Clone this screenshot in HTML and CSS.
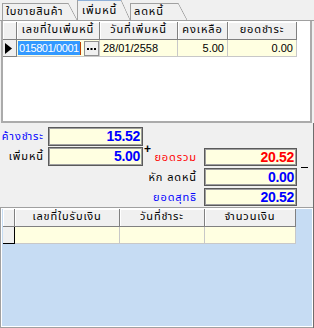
FILE: index.html
```html
<!DOCTYPE html>
<html lang="th">

<head>
  <meta charset="UTF-8">
  <title>เพิ่มหนี้</title>
  <link rel="stylesheet" href="styles.css">
</head>

<body>
  <div class="window">
    <div class="tabs">
      <div class="tab tab-sale">ใบขายสินค้า</div>
      <div class="tab tab-debit active">เพิ่มหนี้</div>
      <div class="tab tab-credit">ลดหนี้</div>
    </div>

    <div class="page">
      <!-- debit note grid -->
      <div class="grid top-grid">
        <div class="row head">
          <div class="cell ind"></div>
          <div class="cell c1">เลขที่ใบเพิ่มหนี้</div>
          <div class="cell c2">วันที่เพิ่มหนี้</div>
          <div class="cell c3">คงเหลือ</div>
          <div class="cell c4">ยอดชำระ</div>
        </div>
        <div class="row data">
          <div class="cell ind">
            <svg width="7" height="11" viewBox="0 0 7 11"><polygon points="0,0 7,5.5 0,11" fill="#000"/></svg>
          </div>
          <div class="cell c1 edit">
            <span class="sel">015801/0001</span><span class="caret"></span>
            <span class="dots">
              <svg width="13" height="13" viewBox="0 0 13 13">
                <rect x="2" y="6" width="2" height="2" fill="#000"/>
                <rect x="5.5" y="6" width="2" height="2" fill="#000"/>
                <rect x="9" y="6" width="2" height="2" fill="#000"/>
              </svg>
            </span>
          </div>
          <div class="cell c2">28/01/2558</div>
          <div class="cell c3 num">5.00</div>
          <div class="cell c4 num">0.00</div>
        </div>
      </div>
    </div>

    <div class="lower">
      <div class="summary">
        <div class="totals totals-left">
          <div class="field">
            <span class="label blue">ค้างชำระ</span>
            <div class="box blue">15.52</div>
          </div>
          <div class="field">
            <span class="label">เพิ่มหนี้</span>
            <div class="box blue">5.00</div>
          </div>
        </div>
        <span class="op plus">+</span>
        <div class="totals totals-right">
          <div class="field">
            <span class="label red">ยอดรวม</span>
            <div class="box red">20.52</div>
          </div>
          <div class="field">
            <span class="label">หัก ลดหนี้</span>
            <div class="box blue">0.00</div>
          </div>
          <div class="field">
            <span class="label blue">ยอดสุทธิ</span>
            <div class="box blue">20.52</div>
          </div>
        </div>
        <span class="op minus"></span>
      </div>

      <!-- payment grid -->
      <div class="payments">
        <div class="grid">
          <div class="row head">
            <div class="cell ind"></div>
            <div class="cell p1">เลขที่ใบรับเงิน</div>
            <div class="cell p2">วันที่ชำระ</div>
            <div class="cell p3">จำนวนเงิน</div>
          </div>
          <div class="row data">
            <div class="cell ind"></div>
            <div class="cell p1"></div>
            <div class="cell p2"></div>
            <div class="cell p3"></div>
          </div>
        </div>
      </div>
    </div>
  </div>
</body>

</html>
```

FILE: styles.css
```css
/* debit note tab */

body {
  margin: 0;
  background-color: #f0f0f0;
  font-family: Tahoma, "Noto Sans Thai", "Liberation Sans", sans-serif;
  font-size: 11px;
  letter-spacing: 0.9px;
  color: #000;
}

.window {
  width: 314px;
  height: 328px;
  overflow: hidden;
}

/* tabs */

.tabs {
  display: flex;
  height: 21px;
  padding-left: 2px;
  border-bottom: 1px solid #a0a0a0;
  box-sizing: border-box;
}

.tab {
  position: relative;
  height: 17px;
  margin-top: 3px;
  padding: 1px 0 0 3px;
  border-left: 1px solid #a0a0a0;
  box-sizing: border-box;
  white-space: nowrap;
  line-height: 15px;
}

.tab::before {
  content: "";
  position: absolute;
  left: 0;
  top: 0;
  width: calc(100% - 9px);
  border-top: 1px solid #a0a0a0;
}

.tab::after {
  content: "";
  position: absolute;
  right: 0;
  top: 0;
  width: 9px;
  height: 100%;
  background: linear-gradient(to top right, transparent calc(50% - 0.7px), #a0a0a0 50%, transparent calc(50% + 0.7px));
}

.tab-sale {
  width: 75px;
  letter-spacing: 0.7px;
}

.tab-debit {
  width: 53px;
}

.tab-credit {
  width: 57px;
}

.tab.active {
  height: 20px;
  margin-top: 0;
  margin-bottom: -1px;
  padding-top: 3px;
  padding-left: 4px;
  background-color: #f0f0f0;
  z-index: 1;
}

.tab.active::before {
  border-top-color: #8fb0d8;
}

/* white page with the top grid */

.page {
  height: 102px;
  margin: 0 2px 0 1px;
  padding-top: 1px;
  border: 2px solid #ababab;
  border-top: none;
  background-color: #fff;
  box-sizing: border-box;
}

.row {
  display: flex;
}

.cell {
  box-sizing: border-box;
  white-space: nowrap;
  overflow: hidden;
}

.head .cell {
  height: 18px;
  line-height: 16px;
  text-align: center;
  background-color: #f0f0f0;
  border-right: 1px solid #808080;
  border-bottom: 1px solid #808080;
  box-shadow: inset 1px 1px 0 #fff;
}

.data .cell {
  height: 17px;
  line-height: 16px;
  padding: 0 3px;
  background-color: #ffffe1;
  border-right: 1px solid #c8c8c8;
  border-bottom: 1px solid #c8c8c8;
  font-family: "Liberation Sans", Arial, sans-serif;
  font-size: 11px;
  letter-spacing: 0;
}

.data .ind {
  background-color: #f0f0f0;
  border-right: 1px solid #808080;
  border-bottom: 1px solid #808080;
  padding: 0;
}

.top-grid .ind {
  width: 14px;
}

.top-grid .data .ind {
  padding: 3px 0 0 2px;
}

.top-grid .data .ind svg {
  display: block;
}

.c1 {
  width: 83px;
}

.c2 {
  width: 78px;
}

.c3 {
  width: 50px;
}

.c4 {
  width: 69px;
}

.num {
  text-align: right;
}

.data .edit {
  display: flex;
  align-items: center;
  padding: 0 0 0 1px;
}

.sel {
  height: 14px;
  line-height: 14px;
  padding: 0 1px;
  background-color: #3399ff;
  color: #fff;
  letter-spacing: -0.4px;
}

.caret {
  width: 1px;
  height: 13px;
  background-color: #c04000;
}

.dots {
  flex-shrink: 0;
  width: 15px;
  height: 15px;
  margin-left: 4px;
  border: 1px solid #909090;
  background-color: #f0f0f0;
  box-sizing: border-box;
}

.dots svg {
  display: block;
}

/* summary boxes */

.lower {
  border-right: 1px solid #6d6d6d;
}

.summary {
  display: flex;
  height: 84px;
  padding-top: 4px;
  box-sizing: border-box;
}

.totals {
  display: flex;
  flex-direction: column;
}

.totals-left {
  gap: 1px;
}

.totals-right {
  gap: 2px;
  margin-top: 21px;
}

.field {
  display: flex;
  align-items: center;
}

.label {
  white-space: nowrap;
  text-align: right;
  direction: rtl;
}

.totals-left .label {
  width: 44px;
  margin-right: 4px;
}

.totals-right .label {
  width: 46px;
  margin-right: 7px;
}

.box {
  height: 19px;
  padding-right: 2px;
  border: 1px solid #5a5a5a;
  box-shadow: inset 0 0 0 1px #a0a0a0;
  background-color: #ffffe1;
  box-sizing: border-box;
  text-align: right;
  font-family: "Liberation Sans", Arial, sans-serif;
  font-size: 14px;
  font-weight: bold;
  letter-spacing: -0.3px;
  line-height: 17px;
}

.totals-left .box {
  width: 95px;
}

.totals-right .box {
  width: 93px;
  height: 18px;
  line-height: 16px;
}

.blue {
  color: #0000ff;
}

.red {
  color: #ff0000;
}

.op {
  font-family: "Liberation Sans", Arial, sans-serif;
  font-weight: bold;
}

.plus {
  width: 7px;
  margin: 16px 0 0 1px;
  font-size: 12px;
  line-height: 12px;
  align-self: flex-start;
}

.minus {
  width: 7px;
  height: 0;
  margin: 40px 0 0 4px;
  border-top: 1px solid #000;
}

/* payment grid */

.payments {
  height: 121px;
  padding: 1px 0 0 2px;
  border: 1px solid #a0a0a0;
  border-right: none;
  background-color: #c6dcf3;
  box-shadow: inset 0 0 0 1px #fff;
  box-sizing: border-box;
}

.payments .ind {
  width: 12px;
}

.payments .data .ind {
  border-right-color: #000;
  border-bottom-color: #000;
}

.p1 {
  width: 105px;
}

.p2 {
  width: 85px;
}

.p3 {
  width: 91px;
}
```
